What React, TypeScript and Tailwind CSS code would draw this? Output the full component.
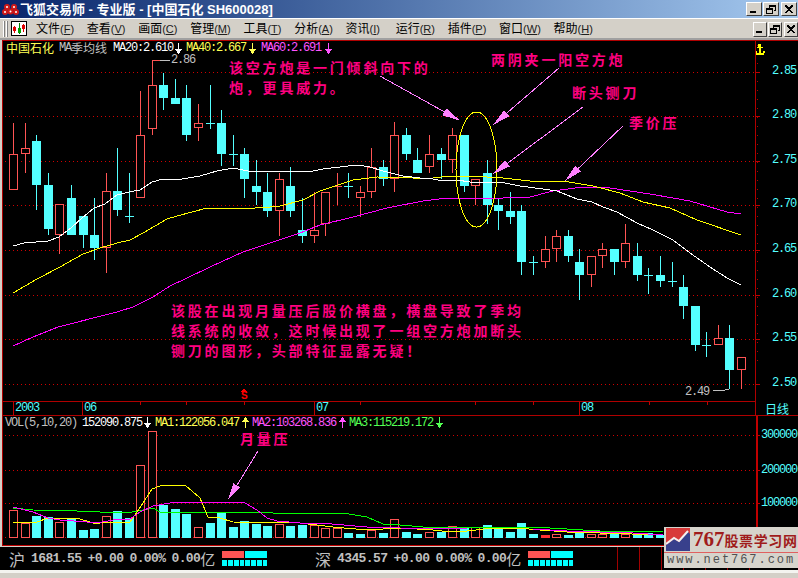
import React from "react";

const MONO = "font-['Liberation_Mono',monospace] text-[12px] tracking-[-1.2px]";
const CJK = "font-['Noto_Sans_CJK_SC',sans-serif] text-[12px]";
const NOTE = "absolute whitespace-nowrap font-['Noto_Sans_CJK_SC',sans-serif] font-bold text-[14px] leading-[20px] tracking-[2.8px] text-[#ff0080]";

const RED = "#ff5454";
const CYAN = "#54ffff";
const PINK = "#ff80ff";

// wickTop, wickBottom, bodyTop, bodyBottom, kind
type C = [number, number, number, number, "r" | "c"];
const candles: C[] = [
  [123, 190, 154, 190, "r"], [123, 173, 148, 154, "r"], [135, 210, 141, 185, "c"], [173, 235, 185, 229, "c"],
  [204, 254, 204, 235, "r"], [185, 235, 198, 235, "c"], [216, 248, 216, 235, "c"], [198, 260, 235, 248, "c"],
  [173, 273, 191, 248, "r"], [148, 216, 191, 210, "c"], [173, 223, 216, 216, "c"], [91, 198, 135, 198, "r"],
  [60, 135, 85, 129, "r"], [73, 110, 85, 98, "c"], [79, 104, 98, 104, "c"], [85, 141, 98, 135, "c"],
  [104, 141, 123, 128, "r"], [85, 129, 123, 123, "c"], [110, 166, 123, 154, "c"], [135, 166, 154, 154, "c"],
  [148, 198, 154, 179, "c"], [160, 205, 186, 192, "c"], [173, 217, 192, 211, "c"], [173, 236, 179, 211, "r"],
  [167, 217, 186, 211, "c"], [198, 243, 230, 236, "c"], [192, 243, 230, 236, "r"], [192, 236, 192, 224, "r"],
  [173, 205, 186, 186, "r"], [173, 198, 186, 186, "c"], [186, 217, 192, 198, "r"], [148, 198, 167, 192, "r"],
  [160, 186, 167, 179, "c"], [122, 192, 135, 179, "r"], [128, 160, 135, 154, "c"], [148, 173, 160, 173, "c"],
  [135, 173, 154, 167, "r"], [148, 179, 154, 160, "c"], [128, 173, 135, 160, "r"], [135, 192, 135, 186, "c"],
  [179, 205, 179, 186, "r"], [160, 224, 173, 205, "c"], [198, 230, 205, 211, "c"], [192, 224, 211, 217, "c"],
  [205, 275, 211, 262, "c"], [256, 275, 262, 262, "c"], [236, 268, 249, 262, "r"], [230, 262, 236, 249, "r"],
  [230, 262, 236, 256, "c"], [249, 300, 262, 275, "c"], [256, 287, 256, 275, "r"], [243, 268, 249, 256, "r"],
  [249, 275, 249, 262, "c"], [224, 268, 243, 262, "r"], [243, 281, 256, 275, "c"], [268, 294, 275, 275, "c"],
  [256, 287, 275, 281, "c"], [262, 287, 281, 281, "c"], [275, 319, 287, 306, "c"], [306, 351, 306, 345, "c"],
  [332, 357, 345, 345, "c"], [325, 345, 338, 345, "r"], [325, 389, 338, 370, "c"], [357, 389, 357, 370, "r"],
];

const vols: [number, "r" | "c" | "f"][] = [
  [510, "r"], [523, "r"], [516, "c"], [517, "c"], [522, "r"], [518, "c"], [530, "c"], [529, "c"], [516, "r"], [511, "c"],
  [518, "c"], [465, "r"], [431, "r"], [505, "c"], [509, "c"], [514, "c"], [527, "r"], [523, "c"], [512, "c"], [527, "c"],
  [521, "c"], [524, "c"], [526, "c"], [524, "r"], [526, "c"], [525, "c"], [525, "r"], [528, "r"], [528, "r"], [533, "c"],
  [534, "c"], [530, "r"], [533, "c"], [519, "r"], [532, "c"], [534, "c"], [532, "r"], [532, "c"], [526, "r"], [527, "c"],
  [527, "r"], [525, "c"], [529, "c"], [532, "c"], [523, "c"], [534, "c"], [535, "f"], [534, "r"], [535, "c"], [531, "c"],
  [534, "r"], [534, "r"], [534, "c"], [534, "r"], [535, "c"], [533, "c"], [535, "c"],
];

const ma20 = "13,246 24,243 48,241 59,237 71,228 82,218 94,208 105,204 117,195 129,192 140,190 152,182 163,179 182,179 200,176 217,171 233,168 248,171 270,172 290,171 313,171 323,169 340,167 357,165 370,167 383,171 403,176 420,178 433,179 443,181 457,180 470,182 500,182 510,184 520,186 543,189 557,191 577,199 592,202 603,207 617,212 637,223 653,230 673,240 690,253 710,267 727,278 741,285";
const ma40 = "13,293 37,279 60,267 83,254 100,248 117,243 130,240 143,233 167,219 177,216 207,208 233,208 240,209 270,207 280,206 303,200 320,191 353,180 377,177 413,178 433,178 450,176 470,176 503,178 530,181 563,181 593,186 620,193 643,202 670,208 697,220 741,235";
const ma60 = "13,346 33,337 58,327 117,312 133,307 153,297 170,286 185,279 210,267 243,252 270,243 300,233 320,225 353,217 387,208 423,201 447,198 503,198 530,197 553,191 583,187 610,188 650,194 690,201 727,212 741,214";
const v1 = "13,522 37,522 48,518 80,519 93,523 100,523 130,522 137,512 143,503 152,489 160,486 185,485 200,498 208,517 220,518 233,522 300,523 333,527 367,530 400,528 433,530 450,532 467,531 493,528 517,528 540,530 567,532 600,533 663,535";
const v2 = "13,507 33,512 48,518 60,520 87,522 97,523 113,520 130,519 140,512 153,506 170,503 193,502 227,502 245,503 257,510 267,518 277,521 300,523 320,523 367,527 400,528 467,529 533,529 567,531 633,533 663,535";
const v3 = "13,508 33,510 77,511 100,512 127,513 153,508 160,512 240,512 273,513 343,513 367,517 383,524 400,525 423,527 533,527 600,531 663,531";

const left = (n: number) => Math.round(9.2 + 11.55 * n);
const priceGrid = [72, 116, 161, 205, 250, 295, 339, 384];
const priceLabels = ["2.85", "2.80", "2.75", "2.70", "2.65", "2.60", "2.55", "2.50"];
const volGrid = [435, 470, 503, 537];

function Arrow({ from, tip, len = 18, w = 4 }: { from: [number, number]; tip: [number, number]; len?: number; w?: number }) {
  const dx = tip[0] - from[0];
  const dy = tip[1] - from[1];
  const d = Math.hypot(dx, dy);
  const ux = dx / d;
  const uy = dy / d;
  const bx = tip[0] - ux * len;
  const by = tip[1] - uy * len;
  return (
    <g>
      <line x1={from[0]} y1={from[1]} x2={bx} y2={by} stroke={PINK} strokeWidth="1" />
      <polygon points={`${tip[0]},${tip[1]} ${bx - uy * w},${by + ux * w} ${bx + uy * w},${by - ux * w}`} fill={PINK} />
    </g>
  );
}

function Dots({ ys }: { ys: number[] }) {
  return (
    <g>
      {ys.map((y) => (
        <line key={y} x1="5" x2="755" y1={y + 0.5} y2={y + 0.5} stroke="#d00000" strokeDasharray="1 3" />
      ))}
    </g>
  );
}

function Tiny({ up, color }: { up?: boolean; color: string }) {
  return (
    <svg width="7" height="11" viewBox="0 0 7 11" className={up ? "rotate-180" : ""} shapeRendering="crispEdges">
      <rect x="3" y="0" width="1" height="11" fill={color} />
      <rect x="2" y="7" width="3" height="3" fill={color} />
      <rect x="1" y="7" width="5" height="1" fill={color} />
      <rect x="0" y="6" width="7" height="1" fill={color} />
    </svg>
  );
}

function Candles() {
  return (
    <g>
      {candles.map(([wt, wb, bt, bb, k], n) => {
        const x = left(n);
        const col = k === "r" ? RED : CYAN;
        return (
          <g key={n}>
            {wt < bt && <rect x={x + 4} y={wt} width="1" height={bt - wt} fill={col} />}
            {wb > bb && <rect x={x + 4} y={bb} width="1" height={wb - bb} fill={col} />}
            {bb === bt ? (
              <rect x={x} y={bt} width="9" height="1" fill={col} />
            ) : k === "r" ? (
              <rect x={x + 0.5} y={bt + 0.5} width="8" height={bb - bt - 1} fill="#000" stroke={col} />
            ) : (
              <rect x={x} y={bt} width="9" height={bb - bt} fill={col} />
            )}
          </g>
        );
      })}
    </g>
  );
}

function Win({ kind }: { kind: "min" | "max" | "x" }) {
  return (
    <svg width="10" height="9" viewBox="0 0 10 9" shapeRendering="crispEdges">
      {kind === "min" && <rect x="1" y="6" width="6" height="2" fill="#000" />}
      {kind === "max" && (
        <g fill="none" stroke="#000">
          <path d="M3.5 2.5 V0.5 H9.5 V5.5 H7.5" />
          <rect x="3" y="0" width="7" height="1.5" fill="#000" stroke="none" />
          <rect x="0.5" y="3.5" width="6" height="5" />
          <rect x="0" y="3" width="7" height="1.5" fill="#000" stroke="none" />
        </g>
      )}
      {kind === "x" && <path d="M1 0.5 L8 8 M2 0.5 L9 8 M8 0.5 L1 8 M9 0.5 L2 8" stroke="#000" strokeWidth="1" fill="none" />}
    </svg>
  );
}

function WinButtons({ cls }: { cls: string }) {
  const btn = "flex items-center justify-center bg-[#d4d0c8] border border-t-white border-l-white border-r-[#404040] border-b-[#404040] " + cls;
  return (
    <div className="flex gap-[1px]">
      <div className={btn}><Win kind="min" /></div>
      <div className={btn}><Win kind="max" /></div>
      <div className={btn + " ml-[1px]"}><Win kind="x" /></div>
    </div>
  );
}

function Flower() {
  const c = [
    [5, 5], [12, 5], [8.5, 9.5], [3, 10], [14, 10],
  ];
  return (
    <svg width="17" height="14" viewBox="0 0 17 14">
      {c.map(([x, y], i) => (
        <g key={i}>
          <circle cx={x} cy={y} r="3" fill="#d01818" />
          <circle cx={x} cy={y} r="1" fill="#fff" />
        </g>
      ))}
    </svg>
  );
}

function ToolIcon() {
  return (
    <svg width="16" height="15" viewBox="0 0 16 15" shapeRendering="crispEdges">
      <rect x="0" y="0" width="16" height="15" fill="#000" />
      <rect x="1" y="1" width="14" height="13" fill="#fff" />
      <rect x="3" y="5" width="1" height="7" fill="#e00000" />
      <rect x="2" y="6" width="3" height="4" fill="#e00000" />
      <rect x="8" y="2" width="1" height="11" fill="#008000" />
      <rect x="7" y="7" width="3" height="5" fill="#00a000" />
      <rect x="12" y="3" width="1" height="8" fill="#e00000" />
      <rect x="11" y="4" width="3" height="4" fill="#e00000" />
    </svg>
  );
}

const menus: [string, string, string][] = [
  ["文件", "F", ""], ["查看", "V", ""], ["画面", "C", ""], ["管理", "M", ""], ["工具", "T", ""], ["分析", "A", ""],
  ["资讯", "I", "pr-[3px]"], ["运行", "R", ""], ["插件", "P", ""], ["窗口", "W", ""], ["帮助", "H", ""],
];

function Quote({ cn, idx, cls }: { cn: string; idx: string; cls: string }) {
  const num = "font-['Liberation_Mono',monospace] text-[13px] tracking-[-0.6px] font-bold text-[#c0c0c0]";
  return (
    <div className={"flex items-center " + cls}>
      <span className="font-['Noto_Sans_CJK_SC',sans-serif] text-[16px] leading-none text-[#c0c0c0] mr-[6px]">{cn}</span>
      <span className={num + " mr-[6px]"}>{idx}</span>
      <span className={num + " mr-[6px]"}>+0.00</span>
      <span className={num + " mr-[6px]"}>0.00%</span>
      <span className={num}>0.00</span>
      <span className="font-['Noto_Sans_CJK_SC',sans-serif] text-[15px] leading-none text-[#c0c0c0] mr-[7px]">亿</span>
      <div className="flex flex-col gap-[2px] w-[45px]">
        <div className="flex gap-[1px] h-[7px]">
          <div className="flex-1 bg-[#ff5454]" />
          <div className="flex-1 bg-[#00ffff]" />
        </div>
        <div className="flex gap-[1px] h-[6px]">
          {[0, 1, 2, 3, 4, 5, 6, 7].map((i) => (
            <div key={i} className="flex-1 bg-[#00ffff]" />
          ))}
        </div>
      </div>
    </div>
  );
}

export default function App() {
  return (
    <div className="relative w-[798px] h-[578px] overflow-hidden flex flex-col bg-[#d4d0c8]">
      {/* title bar */}
      <div className="h-[18px] flex items-center bg-linear-to-r from-[#0a246a] to-[#a6caf0] pl-[2px] pr-[1px]">
        <Flower />
        <span className="ml-[1px] font-['Liberation_Sans','Noto_Sans_CJK_SC',sans-serif] font-bold text-[13px] text-white whitespace-nowrap leading-none">
          飞狐交易师 - 专业版 - [中国石化 SH600028]
        </span>
        <div className="ml-auto">
          <WinButtons cls="w-[16px] h-[14px]" />
        </div>
      </div>

      {/* menu bar */}
      <div className="h-[22px] flex items-center border-t border-t-white border-b-2 border-b-[#a0a0a0] pl-[3px]">
        <div className="w-[2px] h-[16px] bg-white border-r border-[#808080]" />
        <div className="w-[2px] h-[16px] ml-[1px] bg-white border-r border-[#808080]" />
        <div className="ml-[3px]"><ToolIcon /></div>
        <div className="flex gap-[12.7px] ml-[9px]">
          {menus.map(([n, k, c]) => (
            <span key={k} className={"whitespace-nowrap text-black leading-none " + CJK + " " + c}>
              {n}
              <span className="font-['Liberation_Sans',sans-serif] text-[11px] text-[#202020]">
                (<span className="underline">{k}</span>)
              </span>
            </span>
          ))}
        </div>
        <div className="ml-auto mt-[2px]">
          <WinButtons cls="w-[14px] h-[15px]" />
        </div>
      </div>

      {/* chart frame */}
      <div className="ml-[2px] border-l border-[#b00000] bg-black">
        <div className="border-t border-[#b00000]" />

        {/* price pane */}
        <div className="flex h-[361px]">
          <div className="relative w-[752px] border-b border-[#b00000]">
            <div className="flex items-center h-[14px] pl-[3px]">
              <span className={CJK + " text-[#ffff54] leading-none"}>中国石化</span>
              <span className={MONO + " ml-[5px] text-[#c0c0c0]"}>MA</span>
              <span className={CJK + " text-[#c0c0c0] leading-none"}>季均线</span>
              <span className={MONO + " ml-[6px] text-white"}>MA20:2.610</span>
              <div className="ml-[2px]"><Tiny color="#ffffff" /></div>
              <span className={MONO + " ml-[4px] text-[#ffff54]"}>MA40:2.667</span>
              <div className="ml-[3px]"><Tiny color="#ffff54" /></div>
              <span className={MONO + " ml-[5px] text-[#ff54ff]"}>MA60:2.691</span>
              <div className="ml-[4px]"><Tiny color="#ff54ff" /></div>
            </div>
            <svg width="752" height="346" viewBox="3 55 752 346" shapeRendering="crispEdges" className="block">
              <Dots ys={priceGrid} />
              <Candles />
              <polyline points={ma60} fill="none" stroke="#ff00ff" />
              <polyline points={ma40} fill="none" stroke="#ffff00" />
              <polyline points={ma20} fill="none" stroke="#ffffff" />
              <ellipse cx="476.5" cy="169.5" rx="20.5" ry="57.5" fill="none" stroke="#ffff00" />
              <Arrow from={[380, 76]} tip={[460, 120.6]} />
              <Arrow from={[559, 68]} tip={[493, 125]} />
              <Arrow from={[583, 107]} tip={[493, 174]} />
              <Arrow from={[623, 126]} tip={[565, 181]} />
              <polyline points="152,60 160,60" fill="none" stroke={RED} />
              <polyline points="160,60 170,60" fill="none" stroke="#c0c0c0" />
              <polyline points="713,391 725,390 729,389" fill="none" stroke="#c0c0c0" />
              <polygon points="244,388 241,392 247,392" fill="#ff0000" />
            </svg>
            <span className={MONO + " absolute left-[168px] top-[12px] text-[#c0c0c0] leading-[14px]"}>2.86</span>
            <span className={MONO + " absolute left-[682px] top-[344px] text-[#c0c0c0] leading-[14px]"}>2.49</span>
            <span className="absolute left-[238px] top-[350px] font-['Liberation_Sans',sans-serif] font-bold text-[10px] leading-[10px] text-[#ff0000]">S</span>

            <div className={NOTE + " left-[226px] top-[16px]"}>该空方炮是一门倾斜向下的<br />炮，更具威力。</div>
            <div className={NOTE + " left-[488px] top-[8px]"}>两阴夹一阳空方炮</div>
            <div className={NOTE + " left-[569px] top-[41px]"}>断头铡刀</div>
            <div className={NOTE + " left-[626px] top-[71px]"}>季价压</div>
            <div className={NOTE + " left-[168px] top-[259px]"}>
              该股在出现月量压后股价横盘，横盘导致了季均<br />
              线系统的收敛，这时候出现了一组空方炮加断头<br />
              铡刀的图形，头部特征显露无疑！
            </div>
          </div>

          {/* price axis */}
          <div className="relative w-[43px] border-l border-[#b00000]">
            <svg width="42" height="360" viewBox="756 41 42 360" shapeRendering="crispEdges" className="block">
              {Array.from({ length: 36 }, (_, i) => (
                <rect key={i} x="757" y={72 + 9 * (i - 3)} width="1" height="1" fill="#b00000" />
              ))}
              {priceGrid.map((y) => (
                <rect key={y} x="756" y={y} width="4" height="1" fill="#c00000" />
              ))}
              <g fill="#ffff00">
                <rect x="758" y="44" width="3" height="3" />
                <rect x="759" y="44" width="2" height="11" />
                <rect x="755" y="51" width="2" height="2" />
                <rect x="763" y="51" width="2" height="2" />
                <rect x="756" y="53" width="8" height="2" />
                <rect x="757" y="47" width="6" height="1" />
              </g>
            </svg>
            {priceLabels.map((p, i) => (
              <span
                key={p}
                className={MONO + " absolute left-[16px] text-[#54ffff] leading-[14px]"}
                style={{ top: priceGrid[i] - 49 }}
              >
                {p}
              </span>
            ))}
          </div>
        </div>

        {/* time axis */}
        <div className="flex h-[14px] border-b border-[#b00000]">
          <div className="relative w-[752px]">
            <svg width="752" height="13" viewBox="3 402 752 13" shapeRendering="crispEdges" className="block">
              {[13, 82, 314, 579].map((x) => (
                <rect key={x} x={x} y="402" width="1" height="13" fill="#c00000" />
              ))}
              {[140, 186, 244, 360, 475, 533, 649, 707].map((x) => (
                <rect key={x} x={x} y="402" width="1" height="3" fill="#c00000" />
              ))}
            </svg>
            <span className={MONO + " absolute left-[12px] top-0 text-[#54ffff] leading-[13px]"}>2003</span>
            <span className={MONO + " absolute left-[81px] top-0 text-[#54ffff] leading-[13px]"}>06</span>
            <span className={MONO + " absolute left-[313px] top-0 text-[#54ffff] leading-[13px]"}>07</span>
            <span className={MONO + " absolute left-[578px] top-0 text-[#54ffff] leading-[13px]"}>08</span>
          </div>
          <div className={"flex-1 border-l border-[#b00000] flex items-center justify-center text-[#54ffff] leading-none " + CJK}>日线</div>
        </div>

        {/* volume pane */}
        <div className="flex h-[130px] border-b border-[#c00000]">
          <div className="relative w-[753px]">
            <div className="flex items-center h-[13px] pl-[2px]">
              <span className={MONO + " text-[#c0c0c0]"}>VOL(5,10,20)</span>
              <span className={MONO + " ml-[5px] text-white"}>152090.875</span>
              <div className="ml-[2px]"><Tiny color="#ffffff" /></div>
              <span className={MONO + " ml-[4px] text-[#ffff54]"}>MA1:122056.047</span>
              <div className="ml-[3px]"><Tiny up color="#ffff54" /></div>
              <span className={MONO + " ml-[3px] text-[#ff54ff]"}>MA2:103268.836</span>
              <div className="ml-[3px]"><Tiny up color="#ff54ff" /></div>
              <span className={MONO + " ml-[3px] text-[#54ff54]"}>MA3:115219.172</span>
              <div className="ml-[3px]"><Tiny color="#54ff54" /></div>
            </div>
            <svg width="753" height="116" viewBox="3 429 753 116" shapeRendering="crispEdges" className="block">
              <Dots ys={volGrid} />
              {vols.map(([t, k], n) => {
                const x = left(n);
                if (k === "r") {
                  return <rect key={n} x={x + 0.5} y={t + 0.5} width="8" height={537 - t} fill="#000" stroke={RED} />;
                }
                return <rect key={n} x={x} y={t} width="9" height={538 - t} fill={k === "f" ? "#ff3030" : CYAN} />;
              })}
              <polyline points={v3} fill="none" stroke="#00ff00" />
              <polyline points={v1} fill="none" stroke="#ffff00" />
              <polyline points={v2} fill="none" stroke="#ff00ff" />
              <Arrow from={[258, 451]} tip={[228, 500]} len={17} />
            </svg>
            <div className={NOTE + " left-[237px] top-[12px]"}>月量压</div>
          </div>
          <div className="relative flex-1 border-l-2 border-[#c00000]">
            {["300000", "200000", "100000"].map((v, i) => (
              <div key={v} className="absolute left-0 flex items-center h-[14px]" style={{ top: volGrid[i] - 416 - 7 }}>
                <div className="w-[2px] h-px bg-[#c00000]" />
                <span className={MONO + " ml-[1px] text-[#54ffff] leading-[14px]"}>{v}</span>
              </div>
            ))}
          </div>
        </div>
      </div>

      {/* status bar */}
      <div className="h-[23px] mt-[1px] flex items-center bg-black overflow-hidden">
        <Quote cn="沪" idx="1681.55" cls="ml-[9px] w-[306px]" />
        <Quote cn="深" idx="4345.57" cls="w-[302px]" />
        <div className="flex self-stretch gap-[21px]">
          {[0, 1, 2, 3, 4, 5, 6].map((i) => (
            <div key={i} className="w-px bg-[#a00000]" />
          ))}
        </div>
      </div>
      <div className="h-[3px] bg-[#f4f4f0]" />

      {/* watermark logo */}
      <div className="absolute left-[664px] top-[527px] w-[134px] h-[41px] bg-[#d6d4cc] overflow-hidden">
        <div className="flex items-center h-[25px] pl-[2px]">
          <svg width="24" height="23" viewBox="0 0 24 23" className="shrink-0">
            <rect width="24" height="23" fill="#d83a3a" />
            <polygon points="0,23 0,17 8,11 13,14 22,4 24,6 24,23" fill="#38408c" />
            <polyline points="0,16 8,10 13,13 22,3" fill="none" stroke="#f4f0f0" strokeWidth="2" />
          </svg>
          <span className="ml-[3px] font-['Liberation_Serif',serif] font-bold text-[21px] leading-none text-[#a01c1c]">767</span>
          <span className="font-['Noto_Sans_CJK_SC',sans-serif] font-bold text-[14px] tracking-[0.6px] leading-none text-[#a01c1c] whitespace-nowrap">股票学习网</span>
        </div>
        <div className="h-px bg-[#e06060]" />
        <div className="pl-[3px] font-['Liberation_Mono',monospace] text-[12px] leading-[15px] tracking-[1.95px] text-[#505050] whitespace-nowrap">www.net767.com</div>
      </div>
    </div>
  );
}
